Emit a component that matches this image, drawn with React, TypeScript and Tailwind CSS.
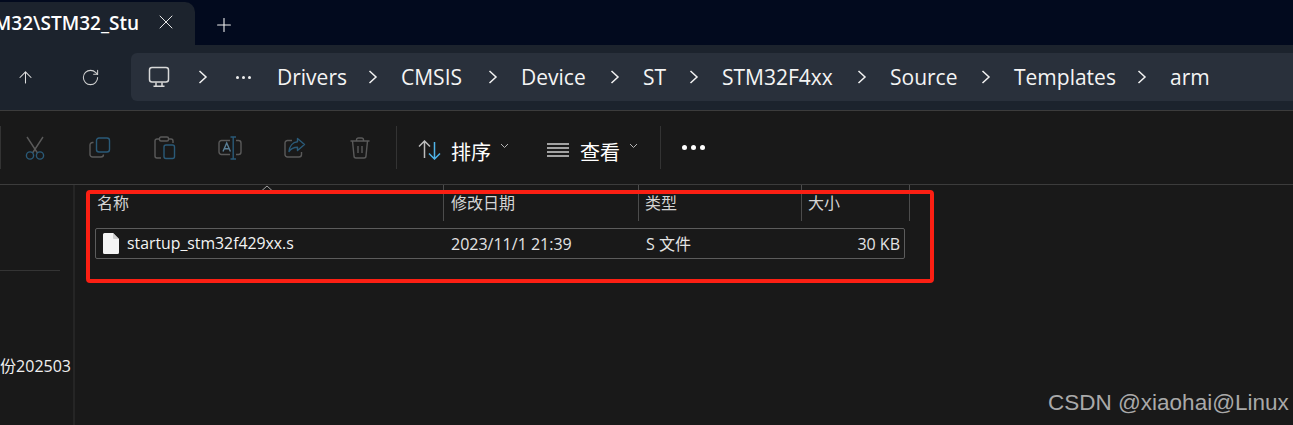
import { Plus, X, ArrowUp, RotateCw } from "lucide-react";

const FONT = "font-['Open_Sans','Noto_Sans_CJK_SC',sans-serif]";
const crumbs = [
  { label: "Drivers", w: "w-[68px]" },
  { label: "CMSIS", w: "w-[64px]" },
  { label: "Device", w: "w-[66px]" },
  { label: "ST", w: "w-[23px]" },
  { label: "STM32F4xx", w: "w-[112px]" },
  { label: "Source", w: "w-[68px]" },
  { label: "Templates", w: "w-[100px]" },
  { label: "arm", w: "w-[39px]" },
];

function Chevron({ className }: { className?: string }) {
  return (
    <svg width="10" height="14" viewBox="0 0 10 14" fill="none" stroke="#f2f2f2" strokeWidth="1.5" className={className}>
      <path d="M1.5 1 L8 7 L1.5 13" />
    </svg>
  );
}

function SmallCaret() {
  return (
    <svg width="9" height="6" viewBox="0 0 9 6" fill="none" stroke="#b5b5b5" strokeWidth="1">
      <path d="M1 1 L4.5 4.5 L8 1" />
    </svg>
  );
}

function Monitor() {
  return (
    <svg width="22" height="22" viewBox="0 0 22 22" fill="none" stroke="#d9d9d9" strokeWidth="1.5">
      <rect x="1.5" y="1.5" width="19" height="14.5" rx="2.5" />
      <path d="M8 16.5 V20 M14 16.5 V20 M5.5 20.3 H16.5" />
    </svg>
  );
}

function Cut() {
  return (
    <svg width="22" height="24" viewBox="0 0 22 24" fill="none" strokeWidth="1.4">
      <path d="M3 1 L13.5 17 M19 1 L8.5 17" stroke="#5a5a5a" />
      <circle cx="6" cy="19.5" r="3.6" stroke="#2a5a78" />
      <circle cx="16" cy="19.5" r="3.6" stroke="#2a5a78" />
    </svg>
  );
}

function Copy() {
  return (
    <svg width="22" height="22" viewBox="0 0 22 22" fill="none" strokeWidth="1.4">
      <path d="M4.5 5.5 H3.5 A2.5 2.5 0 0 0 1 8 V17.5 A2.5 2.5 0 0 0 3.5 20 H12 A2.5 2.5 0 0 0 14.5 17.5" stroke="#5a5a5a" />
      <rect x="7.5" y="1" width="13" height="14" rx="2.5" stroke="#2a5a78" />
    </svg>
  );
}

function Paste() {
  return (
    <svg width="22" height="24" viewBox="0 0 22 24" fill="none" strokeWidth="1.4">
      <path d="M5 3 H3 A2 2 0 0 0 1 5 V20 A2 2 0 0 0 3 22 H7 M15 3 H17 A2 2 0 0 1 19 5 V7" stroke="#5a5a5a" />
      <rect x="5.5" y="1" width="9" height="4" rx="1.5" stroke="#5a5a5a" />
      <rect x="10" y="9" width="10.5" height="13.5" rx="2" stroke="#2a5a78" />
    </svg>
  );
}

function Rename() {
  return (
    <svg width="24" height="24" viewBox="0 0 24 24" fill="none" strokeWidth="1.4">
      <path d="M12 4.5 H3.5 A2.5 2.5 0 0 0 1 7 V16 A2.5 2.5 0 0 0 3.5 18.5 H12 M18 4.5 H20.5 A2.5 2.5 0 0 1 23 7 V16 A2.5 2.5 0 0 1 20.5 18.5 H18" stroke="#5a5a5a" />
      <path d="M5 15.5 L8.7 7 L12.4 15.5 M6.2 12.8 H11.2" stroke="#5a7f96" />
      <path d="M12.5 1 H18 M15.2 1 V23 M12.5 23 H18" stroke="#2a5a78" />
    </svg>
  );
}

function Share() {
  return (
    <svg width="22" height="22" viewBox="0 0 22 22" fill="none" strokeWidth="1.4">
      <path d="M8 3.5 H3.5 A2.5 2.5 0 0 0 1 6 V17.5 A2.5 2.5 0 0 0 3.5 20 H15 A2.5 2.5 0 0 0 17.5 17.5 V15" stroke="#5a5a5a" />
      <path d="M13.5 1.5 L20.5 7.5 L13.5 13.5 V10.3 C10 10.3 7.2 11.3 5 14.5 C5.5 9.5 8.5 5.2 13.5 4.8 Z" stroke="#2a5a78" strokeLinejoin="round" />
    </svg>
  );
}

function Trash() {
  return (
    <svg width="20" height="22" viewBox="0 0 20 22" fill="none" stroke="#5a5a5a" strokeWidth="1.4">
      <path d="M0.5 4 H19.5 M6.5 4 V3 A2 2 0 0 1 8.5 1 H11.5 A2 2 0 0 1 13.5 3 V4" />
      <path d="M2.5 4 L4 19 A2 2 0 0 0 6 21 H14 A2 2 0 0 0 16 19 L17.5 4" />
      <path d="M8 9 V16 M12 9 V16" />
    </svg>
  );
}

function SortIcon() {
  return (
    <svg width="23" height="20" viewBox="0 0 23 20" fill="none" strokeWidth="1.5">
      <path d="M1 6.5 L6.5 1 L12 6.5 M6.5 1 V18" stroke="#bdbdbd" />
      <path d="M11 13.5 L16.5 19 L22 13.5 M16.5 2 V19" stroke="#4fb3e8" />
    </svg>
  );
}

function ViewIcon() {
  return (
    <svg width="22" height="14" viewBox="0 0 22 14" fill="none" stroke="#cfcfcf" strokeWidth="1.5">
      <path d="M0 1 H22 M0 5 H22 M0 9 H22 M0 13 H22" />
    </svg>
  );
}

function FileIcon() {
  return (
    <svg width="16" height="21" viewBox="0 0 16 21">
      <path d="M1.5 0 H10 L16 6 V19.5 A1.5 1.5 0 0 1 14.5 21 H1.5 A1.5 1.5 0 0 1 0 19.5 V1.5 A1.5 1.5 0 0 1 1.5 0 Z" fill="#f4f4f4" />
      <path d="M10 0 L16 6 H11 A1 1 0 0 1 10 5 Z" fill="#cfcfcf" />
    </svg>
  );
}

const actions = [Cut, Copy, Paste, Rename, Share, Trash];

export default function App() {
  return (
    <div className={`${FONT} relative flex h-[425px] w-[1293px] flex-col overflow-hidden bg-[#191919] text-white`}>
      {/* tab strip */}
      <div className="flex h-[45px] items-end bg-[#020a1e]">
        <div className="flex h-[43px] w-[195px] items-center justify-end overflow-hidden rounded-tr-[10px] bg-[#1c232d] pr-[17px]">
          <span className="mr-[15px] text-[19px] font-semibold whitespace-nowrap">M32\STM32_Stu</span>
          <X size={24} strokeWidth={1} className="mb-[3px] shrink-0 text-[#e8e8e8]" />
        </div>
        <div className="mb-[9px] ml-[18px] flex">
          <Plus size={22} strokeWidth={1.2} className="text-[#f0f0f0]" />
        </div>
      </div>

      {/* address row */}
      <div className="flex h-[66px] items-center border-b border-[#3c3c3c] bg-[#1c232d] pb-[1px]">
        <div className="flex w-[131px] items-center pl-[16px]">
          <ArrowUp size={19} strokeWidth={1.3} className="text-[#e0e0e0]" />
          <RotateCw size={19} strokeWidth={1.3} className="ml-[46px] text-[#d0d0d0]" />
        </div>
        <div className="flex h-[48px] flex-1 items-center gap-[23px] rounded-l-[6px] bg-[#29303b] pl-[17px] text-[21px]">
          <Monitor />
          <Chevron className="ml-[5px]" />
          <div className="mr-[2px] ml-[5px] flex w-[16px] gap-[3px]">
            <span className="size-[3px] rounded-full bg-[#f0f0f0]" />
            <span className="size-[3px] rounded-full bg-[#f0f0f0]" />
            <span className="size-[3px] rounded-full bg-[#f0f0f0]" />
          </div>
          {crumbs.map((c, i) => (
            <div key={c.label} className="flex items-center gap-[23px]">
              <span className={`${c.w} pt-[1px] whitespace-nowrap text-[#f4f4f4]`}>{c.label}</span>
              {i < crumbs.length - 1 && <Chevron />}
            </div>
          ))}
        </div>
      </div>

      {/* toolbar */}
      <div className="flex h-[74px] items-center border-b border-[#3c3c3c]">
        <div className="h-[43px] w-px bg-[#333333]" />
        <div className="flex pl-[1px]">
          {actions.map((Icon, i) => (
            <div key={i} className="flex w-[65px] items-center justify-center">
              <Icon />
            </div>
          ))}
        </div>
        <div className="ml-[4px] h-[43px] w-px bg-[#333333]" />
        <div className="ml-[21px] flex items-center">
          <span className="mt-[5px]"><SortIcon /></span>
          <span className="mt-[11px] ml-[10px] text-[20px] leading-none">排序</span>
          <span className="mb-[3px] ml-[9px]"><SmallCaret /></span>
        </div>
        <div className="ml-[38px] flex items-center">
          <span className="mt-[5px] flex"><ViewIcon /></span>
          <span className="mt-[11px] ml-[11px] text-[20px] leading-none">查看</span>
          <span className="mb-[3px] ml-[9px]"><SmallCaret /></span>
        </div>
        <div className="ml-[22px] h-[43px] w-px bg-[#333333]" />
        <div className="ml-[21px] flex gap-[4px]">
          <span className="size-[5px] rounded-full bg-white" />
          <span className="size-[5px] rounded-full bg-white" />
          <span className="size-[5px] rounded-full bg-white" />
        </div>
      </div>

      {/* body */}
      <div className="flex flex-1">
        <aside className="box-content flex w-[73px] flex-col overflow-hidden border-r-[2px] border-[#252525]">
          <div className="mt-[85px] h-px w-[60px] bg-[#343434]" />
          <div className="mt-[85px] flex justify-end pr-[2px] text-[16px] leading-[20px] whitespace-nowrap text-[#f0f0f0]">
            备份202503
          </div>
        </aside>
        <main className="relative flex-1 text-[#d4d4d4]">
          <div className="flex h-[36px] pl-[20px] text-[16px]">
            <div className="w-[348px] pt-[8px] pl-[2px] leading-[20px]">名称</div>
            <div className="w-[195px] border-l border-[#4c4c4c] pt-[8px] pl-[7px] leading-[20px]">修改日期</div>
            <div className="w-[163px] border-l border-[#4c4c4c] pt-[8px] pl-[6px] leading-[20px]">类型</div>
            <div className="w-[109px] border-x border-[#4c4c4c] pt-[8px] pl-[6px] leading-[20px]">大小</div>
          </div>
          <div className="mt-[7px] ml-[20px] flex h-[31px] w-[810px] items-center rounded-[2px] border border-[#5c5c5c] text-[16px] text-[#e4e4e4]">
            <span className="ml-[7px] flex"><FileIcon /></span>
            <span className="ml-[8px] w-[324px] text-[15.8px] text-[#f4f4f4]">startup_stm32f429xx.s</span>
            <span className="w-[195px]">2023/11/1 21:39</span>
            <span className="w-[150px]">S 文件</span>
            <span className="flex-1 pr-[4px] text-right">30 KB</span>
          </div>
          {/* column sort caret */}
          <svg width="12" height="6" viewBox="0 0 12 6" fill="none" stroke="#a0a0a0" className="absolute top-0 left-[186px]">
            <path d="M1 5.5 L6 1 L11 5.5" />
          </svg>
        </main>
      </div>

      {/* red annotation */}
      <div className="absolute top-[190px] left-[86px] h-[93px] w-[848px] rounded-[4px] border-[4px] border-[#fb1f13]" />
      {/* watermark */}
      <div className="absolute top-[390px] left-[1048px] font-['Liberation_Sans'] text-[22.5px] leading-[26px] whitespace-nowrap text-[#a9a9a9]">
        CSDN @xiaohai@Linux
      </div>
    </div>
  );
}
